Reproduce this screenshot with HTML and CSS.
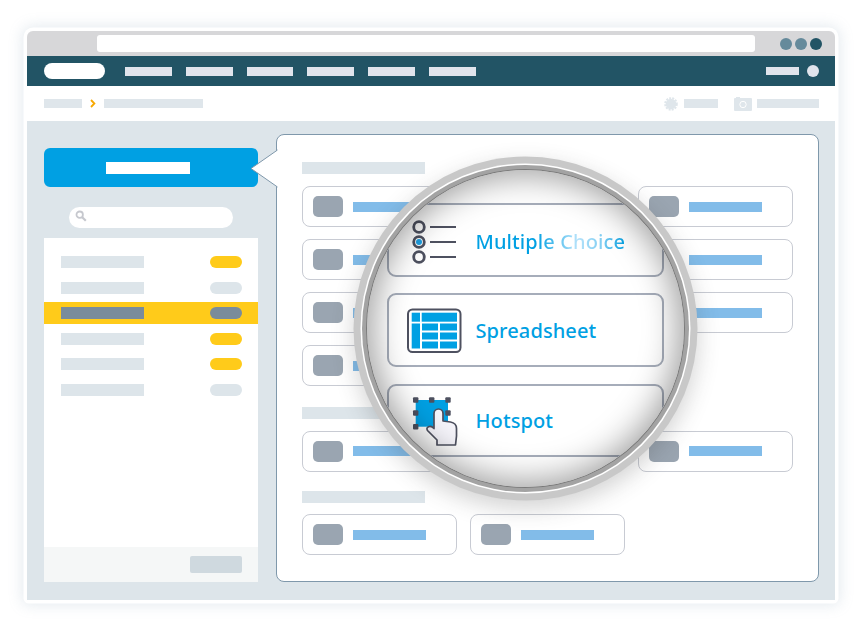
FILE: index.html
```html
<!DOCTYPE html>
<html lang="en">
<head>
<meta charset="utf-8">
<title>Question types</title>
<link rel="stylesheet" href="styles.css">
</head>
<body>
<div class="window">
  <div class="chrome">
    <div class="address"></div>
    <div class="dots"><i class="dot"></i><i class="dot"></i><i class="dot dot-dark"></i></div>
  </div>
  <div class="nav">
    <div class="logo"></div>
    <div class="nav-items"><i></i><i></i><i></i><i></i><i></i><i></i></div>
    <div class="nav-user"><i class="nav-name"></i><i class="nav-avatar"></i></div>
  </div>
  <div class="crumbs">
    <i class="crumb crumb-a"></i>
    <svg class="chevron" width="6" height="9" viewBox="0 0 6 9"><path d="M1 1l3.4 3.5L1 8" fill="none" stroke="#f7a800" stroke-width="1.8"/></svg>
    <i class="crumb crumb-b"></i>
    <div class="tools">
      <svg class="gear" width="14" height="14" viewBox="0 0 14 14"><circle cx="7" cy="7" r="5.300" fill="#dfe6eb"/><circle cx="7" cy="7" r="5.900" fill="none" stroke="#dfe6eb" stroke-width="1.800" stroke-dasharray="2 1.150"/></svg>
      <i class="crumb crumb-c"></i>
      <svg class="camera" width="18" height="15" viewBox="0 0 18 15"><path d="M1 2h1V1h4v1h11a1 1 0 0 1 1 1v11a1 1 0 0 1-1 1H1a1 1 0 0 1-1-1V3a1 1 0 0 1 1-1z" fill="#dfe6eb"/><circle cx="9" cy="8.500" r="3.200" fill="none" stroke="#fff" stroke-width="1"/></svg>
      <i class="crumb crumb-d"></i>
    </div>
  </div>
  <div class="main">
    <aside class="side">
      <div class="action"><i></i></div>
      <div class="search">
        <svg width="12" height="12" viewBox="0 0 12 12"><circle cx="4.700" cy="4.700" r="3.200" fill="none" stroke="#c6c8ce" stroke-width="1.800"/><path d="M7.200 7.200l3.600 3.600" stroke="#c6c8ce" stroke-width="2.200"/></svg>
      </div>
      <div class="list">
        <div class="rows">
          <div class="row"><i class="label"></i><i class="pill pill-on"></i></div>
          <div class="row"><i class="label"></i><i class="pill"></i></div>
          <div class="row row-active"><i class="label"></i><i class="pill"></i></div>
          <div class="row"><i class="label"></i><i class="pill pill-on"></i></div>
          <div class="row"><i class="label"></i><i class="pill pill-on"></i></div>
          <div class="row"><i class="label"></i><i class="pill"></i></div>
        </div>
        <div class="list-foot"><i></i></div>
      </div>
    </aside>
    <section class="panel">
      <svg class="notch" width="28" height="39" viewBox="0 0 28 39"><path d="M27.500 1L1 19.500 27.500 38V1z" fill="#fff"/><path d="M27.500 1L1 19.500 27.500 38" fill="none" stroke="#7f98ab"/></svg>
      <i class="heading"></i>
      <div class="cards">
        <div class="card"><i class="thumb"></i><i class="bar"></i></div><div class="card"><i class="thumb"></i><i class="bar"></i></div><div class="card"><i class="thumb"></i><i class="bar"></i></div>
        <div class="card"><i class="thumb"></i><i class="bar"></i></div><div class="card"><i class="thumb"></i><i class="bar"></i></div><div class="card"><i class="thumb"></i><i class="bar"></i></div>
        <div class="card"><i class="thumb"></i><i class="bar"></i></div><div class="card"><i class="thumb"></i><i class="bar"></i></div><div class="card"><i class="thumb"></i><i class="bar"></i></div>
        <div class="card"><i class="thumb"></i><i class="bar"></i></div>
      </div>
      <i class="heading heading-2"></i>
      <div class="cards cards-tight">
        <div class="card"><i class="thumb"></i><i class="bar"></i></div><div class="card card-last"><i class="thumb"></i><i class="bar"></i></div>
      </div>
      <i class="heading heading-3"></i>
      <div class="cards cards-tight">
        <div class="card"><i class="thumb"></i><i class="bar"></i></div><div class="card"><i class="thumb"></i><i class="bar"></i></div>
      </div>
    </section>
  </div>
  <div class="lens">
    <div class="lens-card">
      <svg class="lens-icon" width="64" height="56" viewBox="0 0 64 56">
        <g fill="none" stroke="#4e5160" stroke-width="2.800"><circle cx="15" cy="15" r="5.300"/><circle cx="15" cy="30" r="5.300"/><circle cx="15" cy="45" r="5.300"/></g>
        <circle cx="15" cy="30" r="3" fill="#1d9fe2"/>
        <path d="M26 15h26M26 30h26M26 45h26" stroke="#4e5160" stroke-width="2"/>
      </svg>
      <span class="lens-text lens-glare">Multiple Choice</span>
    </div>
    <div class="lens-card">
      <svg class="lens-icon" width="64" height="56" viewBox="0 0 64 56">
        <rect x="4" y="7.500" width="52.500" height="42.500" rx="4.500" fill="#fff" stroke="#4e5160" stroke-width="2"/>
        <g fill="#00a0e3">
          <rect x="7.700" y="10.700" width="8.300" height="9"/><rect x="17.700" y="10.700" width="35.300" height="9"/>
          <rect x="7.700" y="21.500" width="8.300" height="25"/>
          <rect x="18" y="21.500" width="16" height="7"/><rect x="36" y="21.500" width="17" height="7"/>
          <rect x="18" y="30.500" width="16" height="7"/><rect x="36" y="30.500" width="17" height="7"/>
          <rect x="18" y="39.500" width="16" height="7"/><rect x="36" y="39.500" width="17" height="7"/>
        </g>
      </svg>
      <span class="lens-text">Spreadsheet</span>
    </div>
    <div class="lens-card">
      <svg class="lens-icon" width="64" height="56" viewBox="0 0 64 56">
        <rect x="11.700" y="8" width="32.300" height="26.700" fill="#00a0e3"/>
        <g fill="#4e5160">
          <rect x="9" y="5.300" width="5.400" height="5.400" rx="1"/><rect x="25" y="5.300" width="5.400" height="5.400" rx="1"/><rect x="41.300" y="5.300" width="5.400" height="5.400" rx="1"/>
          <rect x="9" y="18.300" width="5.400" height="5.400" rx="1"/><rect x="41.300" y="18.300" width="5.400" height="5.400" rx="1"/>
          <rect x="9" y="32" width="5.400" height="5.400" rx="1"/>
        </g>
        <path d="M30 36V21.500a4.500 4.500 0 0 1 9 0V29l7.500 1q6 1 6 6.500v7.500l-1 9H33v-5l-9.500-9.500q-1.500-2.500 1-3.800q3-1 5.500 1.800z" fill="#f6f5fb" stroke="#4e5160" stroke-width="1.700" stroke-linejoin="round"/>
      </svg>
      <span class="lens-text">Hotspot</span>
    </div>
  </div>
</div>
</body>
</html>
```
FILE: styles.css
```css
* { box-sizing: border-box; }
html, body { margin: 0; height: 100%; background: #fff; overflow: hidden; }
body { padding: 31px 29px 0 27px; }
i { display: block; }

.window {
  position: relative;
  width: 808px;
  height: 569px;
  display: flex;
  flex-direction: column;
  border-radius: 6px 6px 2px 2px;
  box-shadow: 0 0 0 3.5px #fff, 0 0 14px 5px rgba(130, 160, 180, .22);
}

.chrome {
  height: 25px;
  display: flex;
  align-items: center;
  padding: 0 13px 0 70px;
  background: #d7d7d9;
  border-radius: 6px 6px 0 0;
}
.address { width: 658px; height: 17px; background: #fff; border-radius: 3px; }
.dots { margin-left: auto; display: flex; gap: 3px; }
.dot { width: 12px; height: 12px; border-radius: 50%; background: #658a9b; }
.dot-dark { background: #225465; }

.nav {
  height: 30px;
  display: flex;
  align-items: center;
  padding: 0 16px 0 17px;
  background: #225465;
}
.logo { width: 61px; height: 16px; background: #fff; border-radius: 8px; margin-right: 20px; }
.nav-items { display: flex; gap: 14px; }
.nav-items i { width: 46.8px; height: 9px; background: #e0e4ec; }
.nav-user { margin-left: auto; display: flex; align-items: center; gap: 8px; }
.nav-name { width: 33px; height: 8px; background: #e0e4ec; }
.nav-avatar { width: 12px; height: 12px; border-radius: 50%; background: #e0e4ec; }

.crumbs {
  height: 35px;
  display: flex;
  align-items: center;
  padding: 0 16px 0 17px;
  background: #fff;
}
.crumb { height: 9px; background: #dfe6eb; }
.crumb-a { width: 38px; }
.crumb-b { width: 99px; }
.crumb-c { width: 34px; margin-left: 6px; }
.crumb-d { width: 62px; margin-left: 5px; }
.chevron { margin: 0 8px 0 8px; }
.tools { margin-left: auto; display: flex; align-items: center; }
.camera { margin-left: 16px; }

.main {
  flex: 1;
  display: flex;
  gap: 18px;
  padding: 13px 16px 18px 17px;
  background: #dde5ea;
  min-height: 0;
}

.side { width: 214px; padding-top: 14px; display: flex; flex-direction: column; }
.action {
  height: 39px;
  display: flex;
  align-items: center;
  justify-content: center;
  background: #00a0e3;
  border-radius: 6px;
}
.action i { width: 84px; height: 12px; background: #fff; margin-left: -6px; }
.search {
  height: 21px;
  margin: 20px 25px 0;
  padding: 3px 0 0 6px;
  background: #fff;
  border-radius: 11px;
  display: flex;
  align-items: flex-start;
}
.list { flex: 1; margin-top: 10px; background: #fff; display: flex; flex-direction: column; }
.rows { flex: 1; padding-top: 13px; display: flex; flex-direction: column; gap: 3.6px; }
.row {
  height: 22px;
  display: flex;
  align-items: center;
  justify-content: space-between;
  padding: 0 16px 0 17px;
}
.label { width: 83px; height: 12px; background: #dde5ea; }
.pill { width: 32px; height: 12px; border-radius: 6px; background: #dde5ea; }
.pill-on { background: #ffcb1a; }
.row-active { background: #ffcb1a; }
.row-active .label, .row-active .pill { background: #7a8c9b; }
.list-foot {
  height: 35px;
  display: flex;
  align-items: center;
  justify-content: flex-end;
  padding-right: 16px;
  background: #f5f7f7;
}
.list-foot i { width: 52px; height: 17px; border-radius: 2px; background: #cfd9df; }

.panel {
  position: relative;
  width: 543px;
  padding: 27px 0 0 25px;
  background: #fff;
  border: 1px solid #7f98ab;
  border-radius: 8px;
}
.notch { position: absolute; left: -27px; top: 13.500px; }
.heading { width: 123px; height: 12px; background: #dde5ea; }
.heading-2 { margin-top: 21px; }
.heading-3 { margin-top: 19px; }
.cards {
  margin-top: 12px;
  display: grid;
  grid-template-columns: repeat(3, 154.5px);
  column-gap: 13.500px;
  row-gap: 12px;
}
.cards-tight { margin-top: 11.500px; }
.card {
  height: 41px;
  display: flex;
  align-items: center;
  gap: 10px;
  padding-left: 10px;
  background: #fff;
  border: 1px solid #c8cbd3;
  border-radius: 8px;
}
.card-last { grid-column: 3; }
.thumb { width: 30px; height: 21px; border-radius: 5px; background: #9aa5b1; }
.bar { width: 73px; height: 10px; background: #82bce9; }

.lens {
  position: absolute;
  left: 339.5px;
  top: 139px;
  width: 317px;
  height: 317px;
  padding: 33px 0 0 20.5px;
  display: flex;
  flex-direction: column;
  gap: 16.75px;
  overflow: hidden;
  background: #fff;
  border-radius: 50%;
  box-shadow:
    0 0 0 1px #7a7a7a,
    0 0 0 5px #a3a3a3,
    0 0 0 6.500px #fff,
    0 0 0 13.500px #c8c8c8,
    0 8px 22px 14px rgba(60, 60, 60, .22);
}
.lens::after {
  content: "";
  position: absolute;
  inset: 0;
  border-radius: 50%;
  box-shadow: inset 0 0 34px 4px rgba(0, 0, 0, .4);
}
.lens-card {
  flex: none;
  width: 277px;
  height: 73.5px;
  display: flex;
  align-items: center;
  gap: 8px;
  padding-left: 14.5px;
  border: 2.5px solid #a6adba;
  border-radius: 9px;
}
.lens-icon { flex: none; }
.lens-text {
  font: 500 20px "Noto Sans", sans-serif;
  letter-spacing: .1px;
  color: #00a0e3;
  white-space: nowrap;
}
.lens-glare {
  margin-top: 3px;
  background: linear-gradient(90deg, #00a0e3 0, #00a0e3 40%, #b5e2fa 68%, #7fcdf2 85%, #00a0e3 100%);
  -webkit-background-clip: text;
  background-clip: text;
  color: transparent;
}
```
